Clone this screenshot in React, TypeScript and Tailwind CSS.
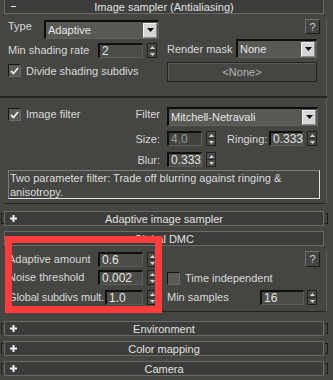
import React from 'react'

//Small pieces of the 3ds Max style form
const Spin = ({ className = '' }: { className?: string }) => (
    <div className={`flex h-[15px] w-[10px] shrink-0 flex-col border border-[#202020] bg-[#4a4b47] ${className}`}>
        <div className="flex flex-1 items-center justify-center border-b border-[#2a2a2a]">
            <svg width="5" height="3" viewBox="0 0 5 3">
                <path d="M2.5 0L5 3H0z" fill="#d2d2d2" />
            </svg>
        </div>
        <div className="flex flex-1 items-center justify-center">
            <svg width="5" height="3" viewBox="0 0 5 3">
                <path d="M0 0H5L2.5 3z" fill="#d2d2d2" />
            </svg>
        </div>
    </div>
)

const Field = ({ value, className = '', dim = false }: { value: string; className?: string; dim?: boolean }) => (
    <div
        className={`h-[15px] shrink-0 border-t-2 border-l-2 border-t-[#101010] border-l-[#101010] border-b border-r border-b-[#5e5f5b] border-r-[#5e5f5b] pl-[2px] text-[12px] leading-[12px] ${
            dim ? 'bg-[#42433f] text-[#9c9c9a]' : 'bg-[#4c4d49] text-[#e4e4e4]'
        } ${className}`}
    >
        {value}
    </div>
)

const Drop = ({ value, className = '' }: { value: string; className?: string }) => (
    <div
        className={`flex h-[19px] shrink-0 items-center border-t-2 border-l-2 border-t-[#0e0e0e] border-l-[#0e0e0e] border-b border-r border-b-[#62635f] border-r-[#62635f] bg-[#585955] pl-[2px] text-[#e6e6e6] ${className}`}
    >
        <span className="flex-1">{value}</span>
        <div className="mr-px flex h-[15px] w-[14px] items-center justify-center border border-t-[#f4f4f4] border-l-[#f4f4f4] border-b-[#8c8c8c] border-r-[#8c8c8c] bg-[#d6d6d6]">
            <svg width="7" height="4" viewBox="0 0 7 4">
                <path d="M0 0H7L3.5 4z" fill="#111" />
            </svg>
        </div>
    </div>
)

const Check = ({ on = false, className = '' }: { on?: boolean; className?: string }) => (
    <div
        className={`flex h-[13px] w-[13px] shrink-0 items-center justify-center border-t border-l border-t-[#161616] border-l-[#161616] border-b border-r border-b-[#6a6a67] border-r-[#6a6a67] bg-[#5a5b57] ${className}`}
    >
        {on && (
            <svg width="9" height="8" viewBox="0 0 9 8">
                <path d="M1 4l2.5 2.5L8 1" stroke="#ececec" strokeWidth="1.8" fill="none" />
            </svg>
        )}
    </div>
)

const Help = ({ className = '' }: { className?: string }) => (
    <div
        className={`flex h-[15px] w-[15px] shrink-0 items-center justify-center border border-t-[#71716e] border-l-[#71716e] border-b-[#1c1c1c] border-r-[#1c1c1c] text-[#d0d0d0] ${className}`}
    >
        ?
    </div>
)

const Bracket = ({ side }: { side: 'l' | 'r' }) => (
    <div
        className={`mt-[2px] h-[11px] w-[3px] border-t border-b border-[#1b1b1b] ${
            side === 'l' ? 'ml-px border-l' : 'ml-px border-r'
        }`}
    />
)

const Header = ({ title, open = false, className = '' }: { title: string; open?: boolean; className?: string }) => (
    <div className={`flex h-[15px] ${className}`}>
        <div className="w-[4px]">{!open && <Bracket side="l" />}</div>
        <div className="flex w-[320px] items-center border border-[#6a6a67] bg-[#3c3d3a] text-[#e2e2e2]">
            <div className="flex w-[14px] justify-center pl-[2px]">
                {open ? (
                    <svg width="5" height="1" viewBox="0 0 5 1">
                        <path d="M0 0.5H5" stroke="#e6e6e6" strokeWidth="1" />
                    </svg>
                ) : (
                    <svg width="7" height="7" viewBox="0 0 7 7">
                        <path d="M3.5 0V7M0 3.5H7" stroke="#f0f0f0" strokeWidth="2" />
                    </svg>
                )}
            </div>
            <div className="flex-1 text-center">{title}</div>
            <div className="w-[14px]" />
        </div>
        <div className="w-[9px]">{!open && <Bracket side="r" />}</div>
    </div>
)

const App = () => {
    return (
        <div className="relative h-[380px] w-[333px] overflow-hidden bg-[#454642] font-['Liberation_Sans',Arial,sans-serif] text-[11px] leading-[14px] whitespace-nowrap text-[#d9d9d9]">
            {/* Image sampler rollout */}
            <Header title="Image sampler (Antialiasing)" open className="-mt-px" />
            <div className="ml-[4px] w-[323px] border-r border-b border-r-[#5f605c] border-b-[#232323] pb-[4px]">
                <div className="mt-[5px] flex h-[20px]">
                    <span className="ml-[4px] w-[36px] shrink-0">Type</span>
                    <Drop value="Adaptive" className="mt-px w-[115px]" />
                    <Help className="ml-[146px]" />
                </div>
                <div className="flex h-[20px] items-start">
                    <span className="mt-[4px] ml-[4px] w-[90px] shrink-0">Min shading rate</span>
                    <Field value="2" className="mt-[4px] w-[45px]" />
                    <Spin className="mt-[4px] ml-[4px]" />
                    <span className="mt-[3px] ml-[10px] w-[69px] shrink-0">Render mask</span>
                    <Drop value="None" className="w-[81px]" />
                </div>
                <div className="mt-[3px] flex h-[20px] items-start">
                    <Check on className="mt-[2px] ml-[4px]" />
                    <span className="mt-[2px] ml-[5px] w-[141px] shrink-0">Divide shading subdivs</span>
                    <div className="flex h-[20px] w-[150px] shrink-0 items-center justify-center border border-[#222] text-[#b4b4b2] shadow-[inset_1px_1px_0_#5a5b57]">
                        &lt;None&gt;
                    </div>
                </div>
                <div className="mt-[14px] -ml-[4px] h-[2px] w-[327px] bg-[#262626]" />

                {/* Image filter */}
                <div className="mt-[9px] flex h-[20px] items-start">
                    <Check on className="mt-px ml-[4px]" />
                    <span className="ml-[5px] w-[100px] shrink-0">Image filter</span>
                    <span className="w-[34px] shrink-0 text-right">Filter</span>
                    <Drop value="Mitchell-Netravali" className="ml-[7px] w-[151px]" />
                </div>
                <div className="mt-[4px] flex h-[15px] items-center">
                    <span className="w-[156px] shrink-0 text-right">Size:</span>
                    <Field value="4.0" dim className="ml-[7px] w-[35px]" />
                    <Spin className="ml-[4px]" />
                    <span className="ml-[11px] w-[42px] shrink-0">Ringing:</span>
                    <Field value="0.333" className="w-[34px]" />
                    <Spin className="ml-[4px]" />
                </div>
                <div className="mt-[6px] flex h-[15px] items-center">
                    <span className="w-[156px] shrink-0 text-right">Blur:</span>
                    <Field value="0.333" className="ml-[7px] w-[35px]" />
                    <Spin className="ml-[4px]" />
                </div>
                <div className="mt-[3px] ml-[4px] h-[29px] w-[312px] border border-t-[#7c7c79] border-l-[#7c7c79] border-b-[#e4e4e4] border-r-[#e4e4e4] pl-px leading-[14px] text-[#dcdcdc]">
                    Two parameter filter: Trade off blurring against ringing &amp;
                    <br />
                    anisotropy.
                </div>
            </div>

            <Header title="Adaptive image sampler" className="mt-[7px]" />
            <Header title="Global DMC" open className="mt-[5px]" />

            {/* Global DMC rollout */}
            <div className="ml-[4px] w-[323px] border-r border-b border-r-[#5f605c] border-b-[#232323] pb-[6px]">
                <div className="mt-[5px] flex h-[16px] items-start">
                    <span className="ml-[4px] w-[90px] shrink-0 leading-[16px]">Adaptive amount</span>
                    <Field value="0.6" className="mt-px w-[45px]" />
                    <Spin className="mt-px ml-[4px]" />
                    <Help className="ml-[148px] h-[16px]" />
                </div>
                <div className="mt-[3px] flex h-[15px] items-start">
                    <span className="ml-[4px] w-[90px] shrink-0 leading-[15px]">Noise threshold</span>
                    <Field value="0.002" className="w-[45px]" />
                    <Spin className="ml-[4px]" />
                    <Check className="mt-[2px] ml-[10px]" />
                    <span className="mt-px ml-[5px] leading-[15px]">Time independent</span>
                </div>
                <div className="mt-[5px] flex h-[15px] items-start">
                    <span className="ml-[4px] w-[97px] shrink-0 leading-[15px] tracking-[-0.15px]">Global subdivs mult.</span>
                    <Field value="1.0" className="w-[38px]" />
                    <Spin className="ml-[4px]" />
                    <span className="ml-[10px] w-[93px] shrink-0 leading-[15px]">Min samples</span>
                    <Field value="16" className="w-[44px]" />
                    <Spin className="ml-[3px]" />
                </div>
            </div>

            <Header title="Environment" className="mt-[9px]" />
            <Header title="Color mapping" className="mt-[5px]" />
            <Header title="Camera" className="mt-[5px]" />

            {/* red highlight drawn over the Global DMC settings */}
            <div className="absolute top-[236px] left-[5px] h-[77px] w-[157px] border-[7px] border-[#ff3b3b]" />
        </div>
    )
}

export default App
